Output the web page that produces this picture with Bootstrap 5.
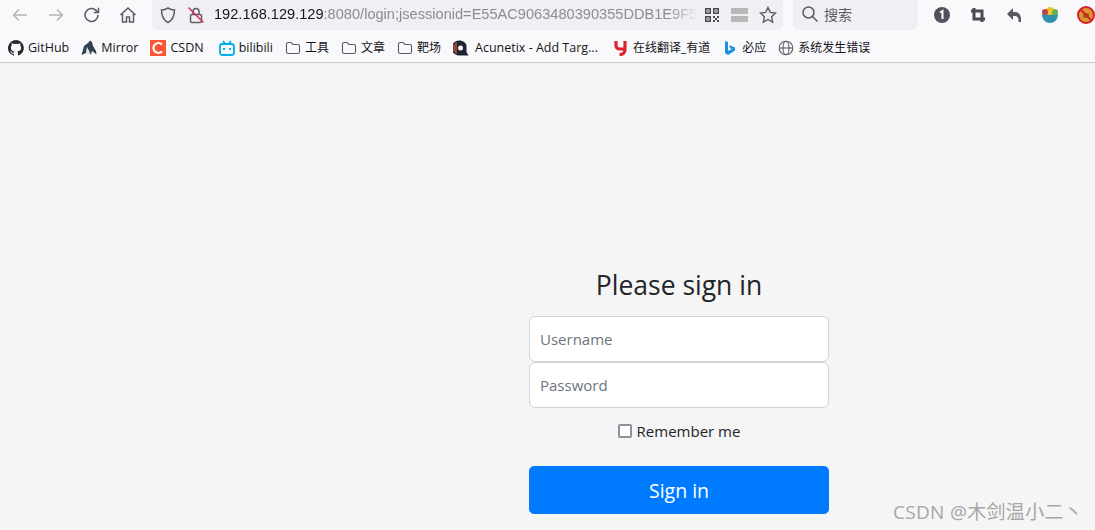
<!DOCTYPE html>
<html lang="en">

<head>
    <meta charset="UTF-8">
    <title>Please sign in</title>
    <link href="https://cdn.jsdelivr.net/npm/bootstrap@5.3.0/dist/css/bootstrap.min.css" rel="stylesheet">
    <style>
        html, body { height: 530px; overflow: hidden; }
        body { background: #f5f5f5; font-family: "Open Sans", "Noto Sans CJK SC", sans-serif; color: #212529; }
        .tool-row { height: 30px; background: #f9f9fb; padding-left: 10px; white-space: nowrap; }
        .tool-icon { width: 20px; height: 20px; flex: none; }
        .tool-icon svg, .mark-icon svg { display: block; width: 100%; height: 100%; }
        .nav-gap { margin-right: 16px; }
        .url-box { width: 631px; height: 30px; margin-left: 14px; background: #f0f0f4; border-radius: 0 0 6px 6px; padding: 0 6px; flex: none; }
        .url-text { width: 484px; margin-left: 8px; font-family: "Liberation Sans", sans-serif; font-size: 14.6px; color: #8c8c91; -webkit-mask-image: linear-gradient(to right, #000 94%, transparent); mask-image: linear-gradient(to right, #000 94%, transparent); }
        .url-host { color: #15141a; }
        .search-box { width: 125px; height: 30px; margin-left: 10px; margin-right: 14px; background: #f0f0f4; border-radius: 0 0 6px 6px; padding: 0 0 2px 7px; font-size: 14px; color: #5b5b66; flex: none; }
        .ext-row { gap: 16px; }
        .mark-row { height: 33px; padding: 4px 0 0 8px; background: #f9f9fb; border-bottom: 1px solid #ccc; font-size: 12px; color: #15141a; white-space: nowrap; gap: 12px; }
        .mark-item { gap: 4px; }
        .mark-icon { width: 16px; height: 16px; flex: none; }
        .mark-latin { font-size: 12.5px; }
        .mark-spaced { margin-left: 3px; }
        .mark-acunetix { gap: 6px; }
        .login-wrap { padding-left: 529px; padding-top: 205px; }
        .login-form { width: 300px; }
        .login-title { font-size: 26.5px; line-height: 34px; font-weight: 400; margin-bottom: 14px; }
        .login-input { height: 46px; font-size: 15px; padding: 10px; background: #fff; border: 1px solid #ced4da; }
        .login-input::placeholder { color: #6c757d; }
        .remember-row { height: 24px; margin-top: 11px; margin-bottom: 23px; font-size: 15px; gap: 5px; }
        .remember-box { width: 14px; height: 14px; margin: 0; appearance: none; background: #fff; border: 2px solid #8f8f9d; border-radius: 2px; }
        .login-btn { height: 48px; font-size: 19.5px; background: #007bff; border-color: #007bff; padding: 1px 0 0; border-radius: 4.8px; }
        .watermark { position: absolute; left: 893px; top: 500px; font-size: 19px; line-height: 24px; color: #a6a6a6; letter-spacing: 0.3px; white-space: nowrap; }
    </style>
</head>

<body>
    <div class="d-flex align-items-center tool-row">
        <span class="tool-icon nav-gap"><svg viewBox="0 0 20 20" fill="none" stroke="#b4b4b8" stroke-width="1.5"><path d="M17 10H4M9 4.5 3.5 10 9 15.5"/></svg></span>
        <span class="tool-icon nav-gap"><svg viewBox="0 0 20 20" fill="none" stroke="#b4b4b8" stroke-width="1.5"><path d="M3 10h13M11 4.5l5.500 5.500-5.500 5.500"/></svg></span>
        <span class="tool-icon nav-gap"><svg viewBox="0 0 20 20" fill="none" stroke="#5b5b66" stroke-width="1.6"><path d="M16 10a6.500 6.500 0 1 1-2-4.700L16 7"/><path d="M16.5 2.8V7.5H11.8" stroke-width="1.5"/></svg></span>
        <span class="tool-icon"><svg viewBox="0 0 20 20" fill="none" stroke="#5b5b66" stroke-width="1.5"><path d="M2.5 10 10 3l7.500 7M4.500 9v8h4v-5h3v5h4V9"/></svg></span>
        <div class="d-flex align-items-center url-box">
            <span class="tool-icon"><svg viewBox="0 0 20 20" fill="none" stroke="#5b5b66" stroke-width="1.5"><path d="M10 3c2 1.300 4 2 6.500 2 0 6-1.500 10-6.500 12.500C5 15 3.500 11 3.500 5 6 5 8 4.300 10 3z"/></svg></span>
            <span class="tool-icon ms-2"><svg viewBox="0 0 20 20" fill="none" stroke="#5b5b66" stroke-width="1.5"><rect x="4.5" y="9.5" width="11" height="8" rx="1.5"/><path d="M7 9.5V6.5a3 3 0 0 1 6 0v3"/><path d="M2.5 2.5l15 15" stroke="#e22850"/></svg></span>
            <div class="url-text"><span class="url-host">192.168.129.129</span>:8080/login;jsessionid=E55AC9063480390355DDB1E9F51</div>
            <span class="tool-icon ms-1"><svg viewBox="0 0 20 20" fill="#4a4a4f"><path d="M3 3h6v6H3zm1.500 1.500v3h3v-3zM11 3h6v6h-6zm1.500 1.500v3h3v-3zM3 11h6v6H3zm1.500 1.500v3h3v-3zM5.300 5.300h1.400v1.400H5.300zM13.300 5.300h1.400v1.400h-1.400zM5.300 13.300h1.400v1.400H5.300zM11 11h2v2h-2zM15 11h2v2h-2zM13 13h2v2h-2zM11 15h2v2h-2zM15 15h2v2h-2z" fill-rule="evenodd"/></svg></span>
            <span class="tool-icon ms-2"><svg viewBox="0 0 20 20" fill="#b8b8b8"><path d="M1 3h17v6H1zM1 11h17v6H1z"/></svg></span>
            <span class="tool-icon ms-2"><svg viewBox="0 0 20 20" fill="none" stroke="#5b5b66" stroke-width="1.4"><path d="m10 2.500 2.300 4.900 5.200.7-3.800 3.700.9 5.300L10 14.500l-4.600 2.600.9-5.300-3.800-3.700 5.200-.7z"/></svg></span>
        </div>
        <div class="d-flex align-items-center gap-1 search-box">
            <span class="tool-icon"><svg viewBox="0 0 20 20" fill="none" stroke="#5b5b66" stroke-width="1.5"><circle cx="8.5" cy="8.5" r="5.5"/><path d="m12.500 12.500 5 5"/></svg></span>
            <span>搜索</span>
        </div>
        <div class="d-flex align-items-center ext-row">
            <span class="tool-icon"><svg viewBox="0 0 20 20"><circle cx="10" cy="10" r="8" fill="#52525e"/><path d="M8 7.5 10.5 6v8" fill="none" stroke="#fff" stroke-width="2"/></svg></span>
            <span class="tool-icon"><svg viewBox="0 0 20 20" fill="none" stroke="#4a4a55" stroke-width="3"><path d="M6 3v11h11M3 6h11v11"/></svg></span>
            <span class="tool-icon"><svg viewBox="0 0 20 20"><path d="M9 3 3 9l6 6v-4h2c2 0 3.500 1.500 3.500 3.500V17H17v-3.500C17 10 14.500 7 11 7H9z" fill="#5b5b66"/></svg></span>
            <span class="tool-icon"><svg viewBox="0 0 20 20"><path d="M2 9h16c0 5-3 9-8 9s-8-4-8-9z" fill="#2f93ad"/><circle cx="10" cy="6" r="4" fill="#f3c331"/><circle cx="5" cy="7" r="3" fill="#c0424c"/><circle cx="15" cy="7" r="3" fill="#6cb04a"/></svg></span>
            <span class="tool-icon"><svg viewBox="0 0 20 20"><circle cx="10" cy="10" r="8" fill="#e0952f" stroke="#d4202c" stroke-width="2"/><path d="M7 8h6v5H7z" fill="#a8601c"/><path d="m4 4 12 12" stroke="#d4202c" stroke-width="2"/></svg></span>
        </div>
    </div>
    <div class="d-flex align-items-center mark-row">
        <div class="d-flex align-items-center mark-item">
            <span class="mark-icon"><svg viewBox="0 0 16 16" fill="#24292f"><path d="M8 0a8 8 0 0 0-2.500 15.600c.4.100.5-.2.500-.4v-1.400c-2.200.5-2.700-1-2.700-1-.4-.9-.9-1.200-.9-1.200-.7-.5.100-.5.100-.5.800.100 1.200.8 1.200.8.700 1.200 1.900.9 2.300.7.100-.5.300-.9.500-1.100-1.800-.2-3.600-.9-3.600-4 0-.9.300-1.600.8-2.100-.1-.2-.4-1 .1-2.100 0 0 .7-.2 2.200.8a7.600 7.600 0 0 1 4 0c1.500-1 2.200-.8 2.200-.8.400 1.100.2 1.900.1 2.100.5.600.8 1.300.8 2.100 0 3.100-1.900 3.700-3.700 3.900.3.300.6.800.6 1.500v2.200c0 .2.100.5.600.4A8 8 0 0 0 8 0z"/></svg></span>
            <span class="mark-latin">GitHub</span>
        </div>
        <div class="d-flex align-items-center mark-item">
            <span class="mark-icon"><svg viewBox="0 0 16 16"><path d="M0.500 15 3 6l4-3 2-2.500 2 1.500 1 4 3 5 .5 3.500-3-2.500-1.500-1-1 3.500-3-1.500-3 .5z" fill="#33414f"/><path d="M4.500 14.500 6 7l3.500 6.500z" fill="#dfe6ea"/></svg></span>
            <span class="mark-latin">Mirror</span>
        </div>
        <div class="d-flex align-items-center mark-item">
            <span class="mark-icon"><svg viewBox="0 0 16 16"><rect width="16" height="16" fill="#fc5531"/><path d="M12 4.500A5 5 0 1 0 12 11.500" fill="none" stroke="#fff" stroke-width="2.2"/></svg></span>
            <span class="mark-latin">CSDN</span>
        </div>
        <div class="d-flex align-items-center mark-item mark-spaced">
            <span class="mark-icon"><svg viewBox="0 0 16 16" fill="none" stroke="#00aeec" stroke-width="1.8"><rect x="1" y="4" width="14" height="11" rx="2.5"/><path d="M4 1l2.500 3M12 1 9.500 4"/><path d="M5 8v2M11 8v2" stroke-width="2"/></svg></span>
            <span class="mark-latin">bilibili</span>
        </div>
        <div class="d-flex align-items-center mark-item">
            <span class="mark-icon"><svg viewBox="0 0 16 16" fill="none" stroke="#5b5b66" stroke-width="1.1"><path d="M1.500 4c0-1 .5-1.500 1.500-1.500h3L8 4.500h5c1 0 1.500.5 1.500 1.500v6c0 1-.5 1.500-1.500 1.500H3c-1 0-1.500-.5-1.500-1.500z"/></svg></span>
            <span>工具</span>
        </div>
        <div class="d-flex align-items-center mark-item">
            <span class="mark-icon"><svg viewBox="0 0 16 16" fill="none" stroke="#5b5b66" stroke-width="1.1"><path d="M1.500 4c0-1 .5-1.500 1.500-1.500h3L8 4.500h5c1 0 1.500.5 1.500 1.500v6c0 1-.5 1.500-1.500 1.500H3c-1 0-1.500-.5-1.500-1.500z"/></svg></span>
            <span>文章</span>
        </div>
        <div class="d-flex align-items-center mark-item">
            <span class="mark-icon"><svg viewBox="0 0 16 16" fill="none" stroke="#5b5b66" stroke-width="1.1"><path d="M1.500 4c0-1 .5-1.500 1.500-1.500h3L8 4.500h5c1 0 1.500.5 1.500 1.500v6c0 1-.5 1.500-1.500 1.500H3c-1 0-1.500-.5-1.500-1.500z"/></svg></span>
            <span>靶场</span>
        </div>
        <div class="d-flex align-items-center mark-item mark-acunetix">
            <span class="mark-icon"><svg viewBox="0 0 16 16"><path d="M6 0.500a7.500 7.500 0 0 0 0 15h9.500l-2-3.500V6c0-3-3-5.500-7.500-5.500z" fill="#1f2430"/><circle cx="7.5" cy="8" r="2.5" fill="#f9f9fb"/><path d="M1 4v8M3 2v12" stroke="#e8553a" stroke-width="1.2"/></svg></span>
            <span class="mark-latin">Acunetix - Add Targ...</span>
        </div>
        <div class="d-flex align-items-center mark-item mark-spaced">
            <span class="mark-icon"><svg viewBox="0 0 16 16" fill="none" stroke="#e0202d" stroke-width="3.2"><path d="M3 1v4.500C3 7.500 4.500 9 6.500 9H11M12 1v9c0 2.500-2 4.500-5.500 4.500"/></svg></span>
            <span>在线翻译_有道</span>
        </div>
        <div class="d-flex align-items-center mark-item">
            <span class="mark-icon"><svg viewBox="0 0 16 16"><path d="M3 1l3 1v9l4-2-2-1-1-3 6 2.500v3L6 15l-3-2z" fill="#1b8fe6"/></svg></span>
            <span>必应</span>
        </div>
        <div class="d-flex align-items-center mark-item">
            <span class="mark-icon"><svg viewBox="0 0 16 16" fill="none" stroke="#5b5b66" stroke-width="1.1"><circle cx="8" cy="8" r="6.8"/><ellipse cx="8" cy="8" rx="3" ry="6.8"/><path d="M1.200 8h13.600"/></svg></span>
            <span>系统发生错误</span>
        </div>
    </div>

    <div class="login-wrap">
        <form class="d-flex flex-column login-form">
            <h2 class="text-center login-title">Please sign in</h2>
            <input type="text" class="form-control login-input" placeholder="Username">
            <input type="password" class="form-control login-input" placeholder="Password">
            <label class="d-flex align-items-center justify-content-center remember-row">
                <input type="checkbox" class="remember-box">
                <span>Remember me</span>
            </label>
            <button type="button" class="btn btn-primary login-btn">Sign in</button>
        </form>
    </div>

    <div class="watermark">CSDN @木剑温小二丶</div>

    <script src="https://cdn.jsdelivr.net/npm/bootstrap@5.3.0/dist/js/bootstrap.bundle.min.js"></script>
</body>

</html>
